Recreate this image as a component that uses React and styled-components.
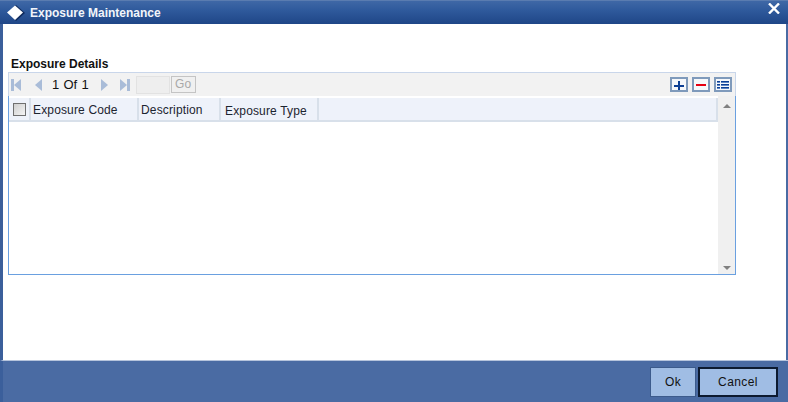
import React from "react";
import styled, { createGlobalStyle } from "styled-components";

const GlobalStyle = createGlobalStyle`
  html, body {
    margin: 0;
    padding: 0;
    background: #fff;
  }
  body {
    font-family: "Liberation Sans", Arial, sans-serif;
  }
`;

const Window = styled.div`
  width: 788px;
  height: 402px;
  display: flex;
  flex-direction: column;
  overflow: hidden;
  box-sizing: border-box;
`;

const TitleBar = styled.div`
  height: 24px;
  flex: none;
  display: flex;
  align-items: center;
  padding: 0 8px 0 7px;
  box-sizing: border-box;
  background: linear-gradient(#3f68a6, #2f5a9c 40%, #1f4687);
  border-top: 1px solid #5a7cb0;
`;

const TitleText = styled.div`
  color: #f2f5fa;
  font-size: 12px;
  font-weight: bold;
  margin-left: 5px;
`;

const CloseButton = styled.svg`
  margin-left: auto;
  margin-top: -8px;
`;

const Body = styled.div`
  flex: 1;
  background: #fff;
  border-left: 3px solid #3b5f9b;
  border-right: 2px solid #4a6ba3;
  padding: 33px 0 0 5px;
  display: flex;
  flex-direction: column;
  box-sizing: border-box;
`;

const SectionTitle = styled.div`
  font-size: 12px;
  font-weight: bold;
  color: #111;
  height: 15px;
  line-height: 14px;
  padding-left: 3px;
`;

const Panel = styled.div`
  width: 728px;
  height: 203px;
  display: flex;
  flex-direction: column;
`;

const Toolbar = styled.div`
  height: 24px;
  flex: none;
  box-sizing: border-box;
  background: #f2f2f2;
  border: 1px solid #c9d6ea;
  border-bottom: none;
  display: flex;
  align-items: center;
  padding: 0 3px 0 2px;
`;

const NavIcon = styled.svg`
  flex: none;
  margin-right: ${(p) => p.$gap}px;
`;

const PageText = styled.div`
  font-size: 13px;
  color: #111;
  margin: 0 12px 0 6px;
  word-spacing: 0.6px;
`;

const PageInput = styled.div`
  width: 32px;
  height: 16px;
  background: #eeeeee;
  border: 1px solid #e2e2e2;
  margin-right: 1px;
`;

const GoButton = styled.div`
  width: 23px;
  height: 15px;
  border: 1px solid #c4c4c4;
  background: #f0f0f0;
  color: #a8a8a8;
  font-size: 12px;
  line-height: 15px;
  text-align: center;
`;

const ToolActions = styled.div`
  margin-left: auto;
  display: flex;
  gap: 4px;
`;

const ToolButton = styled.div`
  width: 14px;
  height: 11px;
  border: 2px solid #7f9abb;
  background: #f6f8fb;
  display: flex;
  align-items: center;
  justify-content: center;
`;

const GridArea = styled.div`
  flex: 1;
  display: flex;
  box-sizing: border-box;
  border: 1px solid #6aa0e0;
  border-top: none;
  min-height: 0;
`;

const GridMain = styled.div`
  flex: 1;
  background: #fff;
  padding-top: 2px;
`;

const HeaderRow = styled.div`
  height: 24px;
  box-sizing: border-box;
  background: #eef2fa;
  border-bottom: 2px solid #d8e0ea;
  border-right: 2px solid #d8e0ea;
  display: flex;
`;

const HeaderCell = styled.div`
  width: ${(p) => p.$width}px;
  box-sizing: border-box;
  border-right: 2px solid #d8e0ea;
  font-size: 12px;
  color: #1c2430;
  letter-spacing: 0.15px;
  padding: ${(p) => p.$top}px 0 0 ${(p) => p.$left}px;
`;

const CheckCell = styled.div`
  width: 22px;
  box-sizing: border-box;
  border-right: 2px solid #d8e0ea;
  padding: 5px 0 0 4px;
`;

const Checkbox = styled.div`
  width: 11px;
  height: 11px;
  border: 1px solid #6f6f6f;
  background: linear-gradient(135deg, #cfcfcf, #f4f4f4);
`;

const ScrollBar = styled.div`
  width: 17px;
  flex: none;
  background: #f0f0f0;
  display: flex;
  flex-direction: column;
  align-items: center;
  justify-content: space-between;
  padding: 8px 0 4px;
  box-sizing: border-box;
`;

const Arrow = styled.div`
  width: 0;
  height: 0;
  border-left: 4px solid transparent;
  border-right: 4px solid transparent;
  border-bottom: ${(p) => (p.$up ? "4px solid #808080" : "none")};
  border-top: ${(p) => (p.$up ? "none" : "4px solid #808080")};
`;

const Footer = styled.div`
  height: 42px;
  flex: none;
  background: #4a6ba3;
  border-top: 1px solid #b6c4dc;
  border-left: 3px solid #3b5f9b;
  box-sizing: border-box;
  display: flex;
  justify-content: flex-end;
  align-items: flex-start;
  padding: 6px 10px 0 0;
  gap: 2px;
`;

const FooterButton = styled.div`
  width: ${(p) => p.$width}px;
  height: 30px;
  box-sizing: border-box;
  background: #a0bde4;
  border: ${(p) => (p.$primary ? "2px solid #0c1a30" : "1px solid #3c5b8c")};
  color: #111;
  font-size: 12px;
  font-weight: 500;
  display: flex;
  align-items: center;
  justify-content: center;
  letter-spacing: 0.4px;
`;

const FirstIcon = () => (
  <NavIcon $gap={13} width="11" height="12" viewBox="0 0 11 12">
    <rect x="0" y="0" width="3" height="12" fill="#a9bcd8" />
    <polygon points="10,0 10,12 3,6" fill="#a9bcd8" />
  </NavIcon>
);

const PrevIcon = () => (
  <NavIcon $gap={4} width="7" height="12" viewBox="0 0 7 12">
    <polygon points="7,0 7,12 0,6" fill="#a9bcd8" />
  </NavIcon>
);

const NextIcon = () => (
  <NavIcon $gap={12} width="7" height="12" viewBox="0 0 7 12">
    <polygon points="0,0 0,12 7,6" fill="#a9bcd8" />
  </NavIcon>
);

const LastIcon = () => (
  <NavIcon $gap={5} width="11" height="12" viewBox="0 0 11 12">
    <polygon points="0,0 0,12 7,6" fill="#a9bcd8" />
    <rect x="7" y="0" width="3" height="12" fill="#a9bcd8" />
  </NavIcon>
);

export default function App() {
  return (
    <Window>
      <GlobalStyle />
      <TitleBar>
        <svg width="18" height="16" viewBox="0 0 18 16">
          <polygon points="9,0 18,8 9,16 7,14 14,8 7,1.5" fill="#0f2a5c" />
          <polygon points="8,0.5 16,7.5 8,15 0,7.5" fill="#fff" />
        </svg>
        <TitleText>Exposure Maintenance</TitleText>
        <CloseButton width="12" height="11" viewBox="0 0 12 11">
          <path d="M1 0.5 L11 10.5 M11 0.5 L1 10.5" stroke="#fff" strokeWidth="2.4" />
        </CloseButton>
      </TitleBar>
      <Body>
        <SectionTitle>Exposure Details</SectionTitle>
        <Panel>
          <Toolbar>
            <FirstIcon />
            <PrevIcon />
            <PageText>1 Of 1</PageText>
            <NextIcon />
            <LastIcon />
            <PageInput />
            <GoButton>Go</GoButton>
            <ToolActions>
              <ToolButton>
                <svg width="10" height="10" viewBox="0 0 10 10">
                  <path d="M0 6 H10 M5 1 V10" stroke="#0d3f94" strokeWidth="2" />
                </svg>
              </ToolButton>
              <ToolButton>
                <svg width="10" height="4" viewBox="0 0 10 4">
                  <rect x="0" y="1" width="10" height="2" fill="#e60012" />
                </svg>
              </ToolButton>
              <ToolButton>
                <svg width="12" height="8" viewBox="0 0 12 8" shapeRendering="crispEdges">
                  <path d="M0 0.5 H3 M4 0.5 H12 M0 3.5 H3 M4 3.5 H12 M0 6.5 H3 M4 6.5 H12" stroke="#0d3f94" strokeWidth="1" />
                  <path d="M0 1.5 H3 M4 1.5 H12 M0 4.5 H3 M4 4.5 H12 M0 7.5 H3 M4 7.5 H12" stroke="#5f86c4" strokeWidth="1" />
                </svg>
              </ToolButton>
            </ToolActions>
          </Toolbar>
          <GridArea>
            <GridMain>
              <HeaderRow>
                <CheckCell>
                  <Checkbox />
                </CheckCell>
                <HeaderCell $width={108} $left={2} $top={5}>Exposure Code</HeaderCell>
                <HeaderCell $width={82} $left={2} $top={5}>Description</HeaderCell>
                <HeaderCell $width={98} $left={4} $top={6}>Exposure Type</HeaderCell>
              </HeaderRow>
            </GridMain>
            <ScrollBar>
              <Arrow $up />
              <Arrow />
            </ScrollBar>
          </GridArea>
        </Panel>
      </Body>
      <Footer>
        <FooterButton $width={46}>Ok</FooterButton>
        <FooterButton $width={80} $primary>Cancel</FooterButton>
      </Footer>
    </Window>
  );
}
